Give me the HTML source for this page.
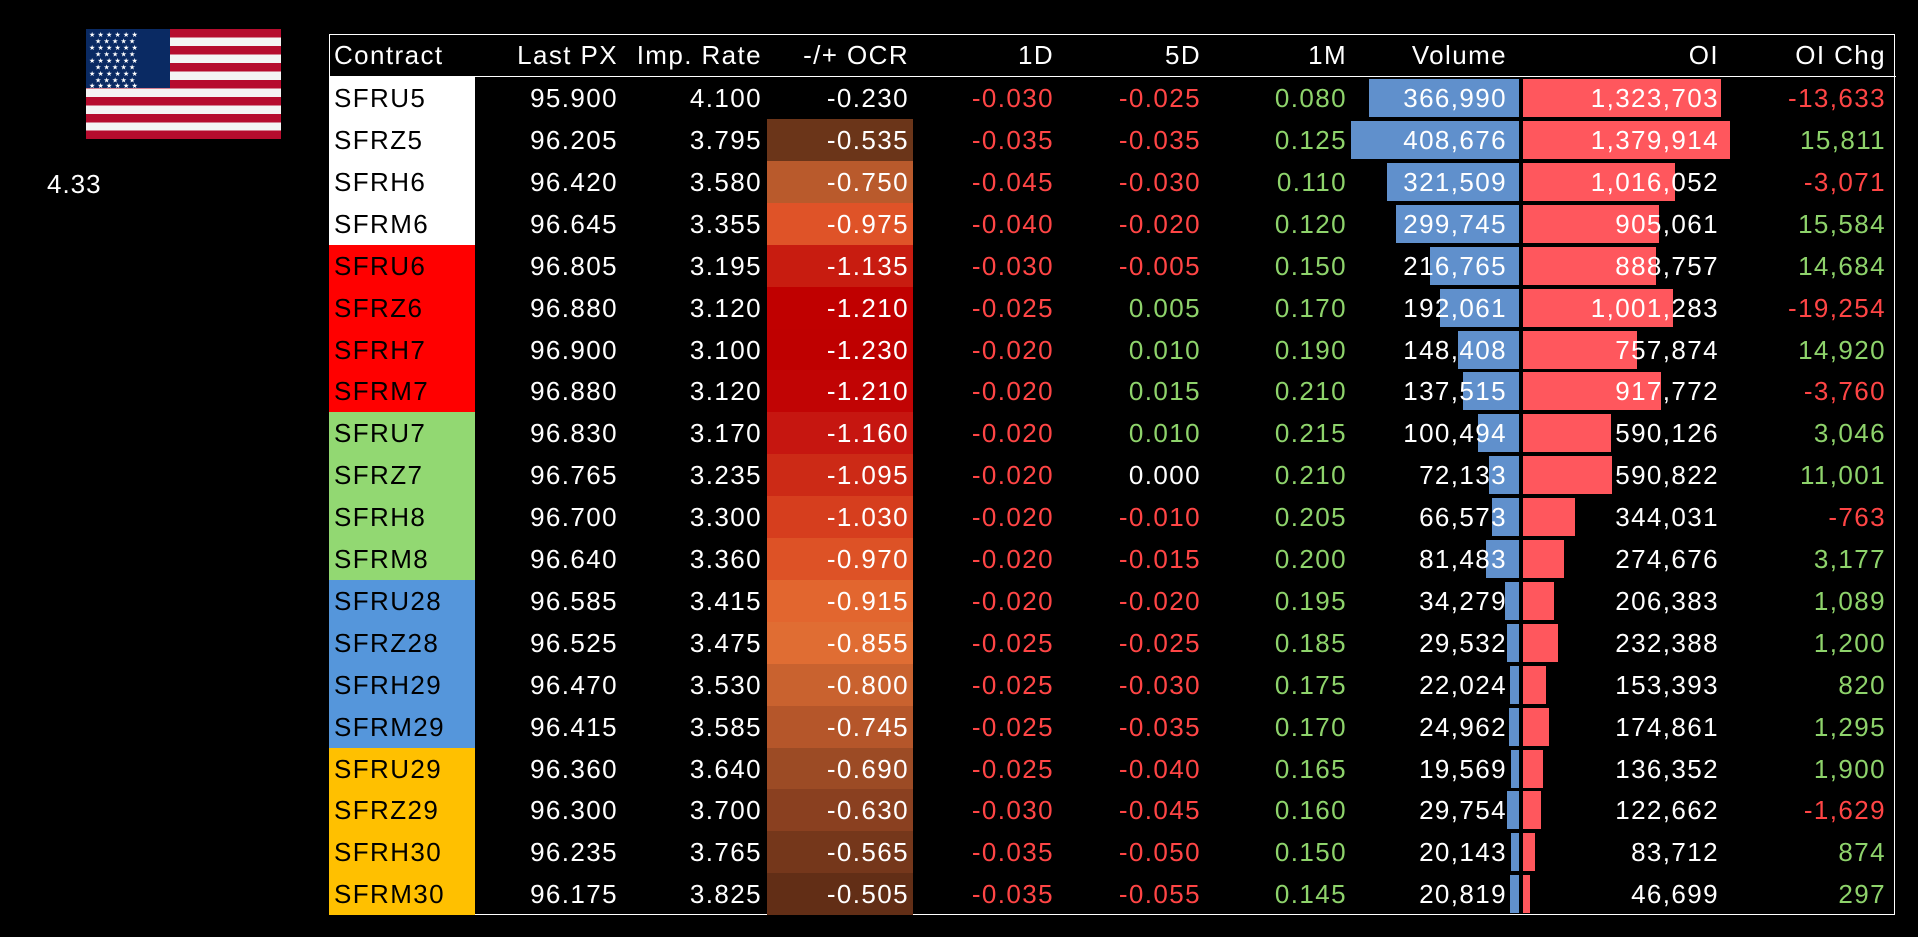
<!DOCTYPE html>
<html><head><meta charset="utf-8"><style>
body{margin:0;background:#000;width:1918px;height:937px;overflow:hidden;font-family:"Liberation Sans",sans-serif;}
.flag{position:absolute;left:86px;top:29px;width:195px;height:110px}
.v{position:absolute;left:47px;top:169px;color:#fff;font-size:26px;letter-spacing:1px}
.tbl{position:absolute;left:329px;top:34px;width:1566px;height:881px;border:1px solid #fff;box-sizing:border-box}
.hl{position:absolute;left:329px;top:76px;width:1567px;height:1px;background:#fff}
.r{position:absolute;left:0;width:1918px;height:42px;font-size:26px;letter-spacing:1.4px;color:#fff}
.r span{position:absolute;top:0;line-height:42px;white-space:nowrap}
.r div{position:absolute}
.c{left:329px;width:146px;height:42px}
.ct{left:334px}
.lp{right:1300px}.ir{right:1156px}.oc{right:1009px}.d1{right:864px}.d5{right:717px}.m1{right:571px}.vo{right:411px}.oi{right:199px}.ch{right:32px}
.ob{left:767px;width:146px;height:42px}
.vb{right:399px;top:2px;height:38px;background:#6090cc}
.ib{left:1523px;top:2px;height:38px;background:#ff575d}
.n{color:#ff4545}.p{color:#8ed36b}
.h{top:34px;height:43px}
.h span{line-height:43px}
</style></head><body>
<svg class="flag" viewBox="0 0 195 110" preserveAspectRatio="none">
<rect width="195" height="110" fill="#f4f4f4"/>
<g fill="#b60c2e"><rect y="0" width="195" height="8.5"/><rect y="17" width="195" height="8.5"/><rect y="34" width="195" height="8.5"/><rect y="51" width="195" height="8.5"/><rect y="68" width="195" height="8.5"/><rect y="85" width="195" height="8.5"/><rect y="101.5" width="195" height="8.5"/></g>
<rect width="84" height="59" fill="#0a2a63"/>
<g fill="#fff" font-size="7" font-family="DejaVu Sans">
<text x="3" y="8">★ ★ ★ ★ ★ ★</text><text x="9" y="14.5">★ ★ ★ ★ ★</text><text x="3" y="21">★ ★ ★ ★ ★ ★</text><text x="9" y="27.5">★ ★ ★ ★ ★</text><text x="3" y="34">★ ★ ★ ★ ★ ★</text><text x="9" y="40.5">★ ★ ★ ★ ★</text><text x="3" y="47">★ ★ ★ ★ ★ ★</text><text x="9" y="53.5">★ ★ ★ ★ ★</text><text x="3" y="59">★ ★ ★ ★ ★ ★</text></g>
</svg>
<div class="v">4.33</div>
<div class="tbl"></div>
<div class="hl"></div>
<div class="r h"><span class="ct">Contract</span><span class="lp">Last PX</span><span class="ir">Imp. Rate</span><span class="oc">-/+ OCR</span><span class="d1">1D</span><span class="d5">5D</span><span class="m1">1M</span><span class="vo">Volume</span><span class="oi">OI</span><span class="ch">OI Chg</span></div>

<div class="r" style="top:77px"><div class="c" style="background:#fff"></div><span class="ct" style="color:#000">SFRU5</span><span class="lp">95.900</span><span class="ir">4.100</span><span class="oc">-0.230</span><span class="d1 n">-0.030</span><span class="d5 n">-0.025</span><span class="m1 p">0.080</span><div class="vb" style="width:150px"></div><span class="vo">366,990</span><div class="ib" style="width:198px"></div><span class="oi">1,323,703</span><span class="ch n">-13,633</span></div>
<div class="r" style="top:119px"><div class="c" style="background:#fff"></div><span class="ct" style="color:#000">SFRZ5</span><span class="lp">96.205</span><span class="ir">3.795</span><div class="ob" style="background:#6b3519"></div><span class="oc">-0.535</span><span class="d1 n">-0.035</span><span class="d5 n">-0.035</span><span class="m1 p">0.125</span><div class="vb" style="width:168px"></div><span class="vo">408,676</span><div class="ib" style="width:207px"></div><span class="oi">1,379,914</span><span class="ch p">15,811</span></div>
<div class="r" style="top:161px"><div class="c" style="background:#fff"></div><span class="ct" style="color:#000">SFRH6</span><span class="lp">96.420</span><span class="ir">3.580</span><div class="ob" style="background:#b95a2c"></div><span class="oc">-0.750</span><span class="d1 n">-0.045</span><span class="d5 n">-0.030</span><span class="m1 p">0.110</span><div class="vb" style="width:132px"></div><span class="vo">321,509</span><div class="ib" style="width:152px"></div><span class="oi">1,016,052</span><span class="ch n">-3,071</span></div>
<div class="r" style="top:203px"><div class="c" style="background:#fff"></div><span class="ct" style="color:#000">SFRM6</span><span class="lp">96.645</span><span class="ir">3.355</span><div class="ob" style="background:#df5328"></div><span class="oc">-0.975</span><span class="d1 n">-0.040</span><span class="d5 n">-0.020</span><span class="m1 p">0.120</span><div class="vb" style="width:123px"></div><span class="vo">299,745</span><div class="ib" style="width:136px"></div><span class="oi">905,061</span><span class="ch p">15,584</span></div>
<div class="r" style="top:245px"><div class="c" style="background:#ff0000"></div><span class="ct" style="color:#000">SFRU6</span><span class="lp">96.805</span><span class="ir">3.195</span><div class="ob" style="background:#c81c10"></div><span class="oc">-1.135</span><span class="d1 n">-0.030</span><span class="d5 n">-0.005</span><span class="m1 p">0.150</span><div class="vb" style="width:89px"></div><span class="vo">216,765</span><div class="ib" style="width:133px"></div><span class="oi">888,757</span><span class="ch p">14,684</span></div>
<div class="r" style="top:287px"><div class="c" style="background:#ff0000"></div><span class="ct" style="color:#000">SFRZ6</span><span class="lp">96.880</span><span class="ir">3.120</span><div class="ob" style="background:#c00000"></div><span class="oc">-1.210</span><span class="d1 n">-0.025</span><span class="d5 p">0.005</span><span class="m1 p">0.170</span><div class="vb" style="width:79px"></div><span class="vo">192,061</span><div class="ib" style="width:150px"></div><span class="oi">1,001,283</span><span class="ch n">-19,254</span></div>
<div class="r" style="top:329px"><div class="c" style="background:#ff0000"></div><span class="ct" style="color:#000">SFRH7</span><span class="lp">96.900</span><span class="ir">3.100</span><div class="ob" style="background:#bf0000"></div><span class="oc">-1.230</span><span class="d1 n">-0.020</span><span class="d5 p">0.010</span><span class="m1 p">0.190</span><div class="vb" style="width:61px"></div><span class="vo">148,408</span><div class="ib" style="width:114px"></div><span class="oi">757,874</span><span class="ch p">14,920</span></div>
<div class="r" style="top:370px"><div class="c" style="background:#ff0000"></div><span class="ct" style="color:#000">SFRM7</span><span class="lp">96.880</span><span class="ir">3.120</span><div class="ob" style="background:#c10404"></div><span class="oc">-1.210</span><span class="d1 n">-0.020</span><span class="d5 p">0.015</span><span class="m1 p">0.210</span><div class="vb" style="width:56px"></div><span class="vo">137,515</span><div class="ib" style="width:138px"></div><span class="oi">917,772</span><span class="ch n">-3,760</span></div>
<div class="r" style="top:412px"><div class="c" style="background:#92d872"></div><span class="ct" style="color:#000">SFRU7</span><span class="lp">96.830</span><span class="ir">3.170</span><div class="ob" style="background:#c61610"></div><span class="oc">-1.160</span><span class="d1 n">-0.020</span><span class="d5 p">0.010</span><span class="m1 p">0.215</span><div class="vb" style="width:41px"></div><span class="vo">100,494</span><div class="ib" style="width:88px"></div><span class="oi">590,126</span><span class="ch p">3,046</span></div>
<div class="r" style="top:454px"><div class="c" style="background:#92d872"></div><span class="ct" style="color:#000">SFRZ7</span><span class="lp">96.765</span><span class="ir">3.235</span><div class="ob" style="background:#cc2a16"></div><span class="oc">-1.095</span><span class="d1 n">-0.020</span><span class="d5">0.000</span><span class="m1 p">0.210</span><div class="vb" style="width:30px"></div><span class="vo">72,133</span><div class="ib" style="width:89px"></div><span class="oi">590,822</span><span class="ch p">11,001</span></div>
<div class="r" style="top:496px"><div class="c" style="background:#92d872"></div><span class="ct" style="color:#000">SFRH8</span><span class="lp">96.700</span><span class="ir">3.300</span><div class="ob" style="background:#d63e1e"></div><span class="oc">-1.030</span><span class="d1 n">-0.020</span><span class="d5 n">-0.010</span><span class="m1 p">0.205</span><div class="vb" style="width:27px"></div><span class="vo">66,573</span><div class="ib" style="width:52px"></div><span class="oi">344,031</span><span class="ch n">-763</span></div>
<div class="r" style="top:538px"><div class="c" style="background:#92d872"></div><span class="ct" style="color:#000">SFRM8</span><span class="lp">96.640</span><span class="ir">3.360</span><div class="ob" style="background:#dd5226"></div><span class="oc">-0.970</span><span class="d1 n">-0.020</span><span class="d5 n">-0.015</span><span class="m1 p">0.200</span><div class="vb" style="width:33px"></div><span class="vo">81,483</span><div class="ib" style="width:41px"></div><span class="oi">274,676</span><span class="ch p">3,177</span></div>
<div class="r" style="top:580px"><div class="c" style="background:#5596db"></div><span class="ct" style="color:#000">SFRU28</span><span class="lp">96.585</span><span class="ir">3.415</span><div class="ob" style="background:#e2662f"></div><span class="oc">-0.915</span><span class="d1 n">-0.020</span><span class="d5 n">-0.020</span><span class="m1 p">0.195</span><div class="vb" style="width:14px"></div><span class="vo">34,279</span><div class="ib" style="width:31px"></div><span class="oi">206,383</span><span class="ch p">1,089</span></div>
<div class="r" style="top:622px"><div class="c" style="background:#5596db"></div><span class="ct" style="color:#000">SFRZ28</span><span class="lp">96.525</span><span class="ir">3.475</span><div class="ob" style="background:#e06d33"></div><span class="oc">-0.855</span><span class="d1 n">-0.025</span><span class="d5 n">-0.025</span><span class="m1 p">0.185</span><div class="vb" style="width:12px"></div><span class="vo">29,532</span><div class="ib" style="width:35px"></div><span class="oi">232,388</span><span class="ch p">1,200</span></div>
<div class="r" style="top:664px"><div class="c" style="background:#5596db"></div><span class="ct" style="color:#000">SFRH29</span><span class="lp">96.470</span><span class="ir">3.530</span><div class="ob" style="background:#c9622f"></div><span class="oc">-0.800</span><span class="d1 n">-0.025</span><span class="d5 n">-0.030</span><span class="m1 p">0.175</span><div class="vb" style="width:9px"></div><span class="vo">22,024</span><div class="ib" style="width:23px"></div><span class="oi">153,393</span><span class="ch p">820</span></div>
<div class="r" style="top:706px"><div class="c" style="background:#5596db"></div><span class="ct" style="color:#000">SFRM29</span><span class="lp">96.415</span><span class="ir">3.585</span><div class="ob" style="background:#b5562a"></div><span class="oc">-0.745</span><span class="d1 n">-0.025</span><span class="d5 n">-0.035</span><span class="m1 p">0.170</span><div class="vb" style="width:10px"></div><span class="vo">24,962</span><div class="ib" style="width:26px"></div><span class="oi">174,861</span><span class="ch p">1,295</span></div>
<div class="r" style="top:748px"><div class="c" style="background:#ffc000"></div><span class="ct" style="color:#000">SFRU29</span><span class="lp">96.360</span><span class="ir">3.640</span><div class="ob" style="background:#9c4b25"></div><span class="oc">-0.690</span><span class="d1 n">-0.025</span><span class="d5 n">-0.040</span><span class="m1 p">0.165</span><div class="vb" style="width:8px"></div><span class="vo">19,569</span><div class="ib" style="width:20px"></div><span class="oi">136,352</span><span class="ch p">1,900</span></div>
<div class="r" style="top:789px"><div class="c" style="background:#ffc000"></div><span class="ct" style="color:#000">SFRZ29</span><span class="lp">96.300</span><span class="ir">3.700</span><div class="ob" style="background:#8a4020"></div><span class="oc">-0.630</span><span class="d1 n">-0.030</span><span class="d5 n">-0.045</span><span class="m1 p">0.160</span><div class="vb" style="width:12px"></div><span class="vo">29,754</span><div class="ib" style="width:18px"></div><span class="oi">122,662</span><span class="ch n">-1,629</span></div>
<div class="r" style="top:831px"><div class="c" style="background:#ffc000"></div><span class="ct" style="color:#000">SFRH30</span><span class="lp">96.235</span><span class="ir">3.765</span><div class="ob" style="background:#75371b"></div><span class="oc">-0.565</span><span class="d1 n">-0.035</span><span class="d5 n">-0.050</span><span class="m1 p">0.150</span><div class="vb" style="width:8px"></div><span class="vo">20,143</span><div class="ib" style="width:12px"></div><span class="oi">83,712</span><span class="ch p">874</span></div>
<div class="r" style="top:873px"><div class="c" style="background:#ffc000"></div><span class="ct" style="color:#000">SFRM30</span><span class="lp">96.175</span><span class="ir">3.825</span><div class="ob" style="background:#622e16"></div><span class="oc">-0.505</span><span class="d1 n">-0.035</span><span class="d5 n">-0.055</span><span class="m1 p">0.145</span><div class="vb" style="width:9px"></div><span class="vo">20,819</span><div class="ib" style="width:7px"></div><span class="oi">46,699</span><span class="ch p">297</span></div>
</body></html>
